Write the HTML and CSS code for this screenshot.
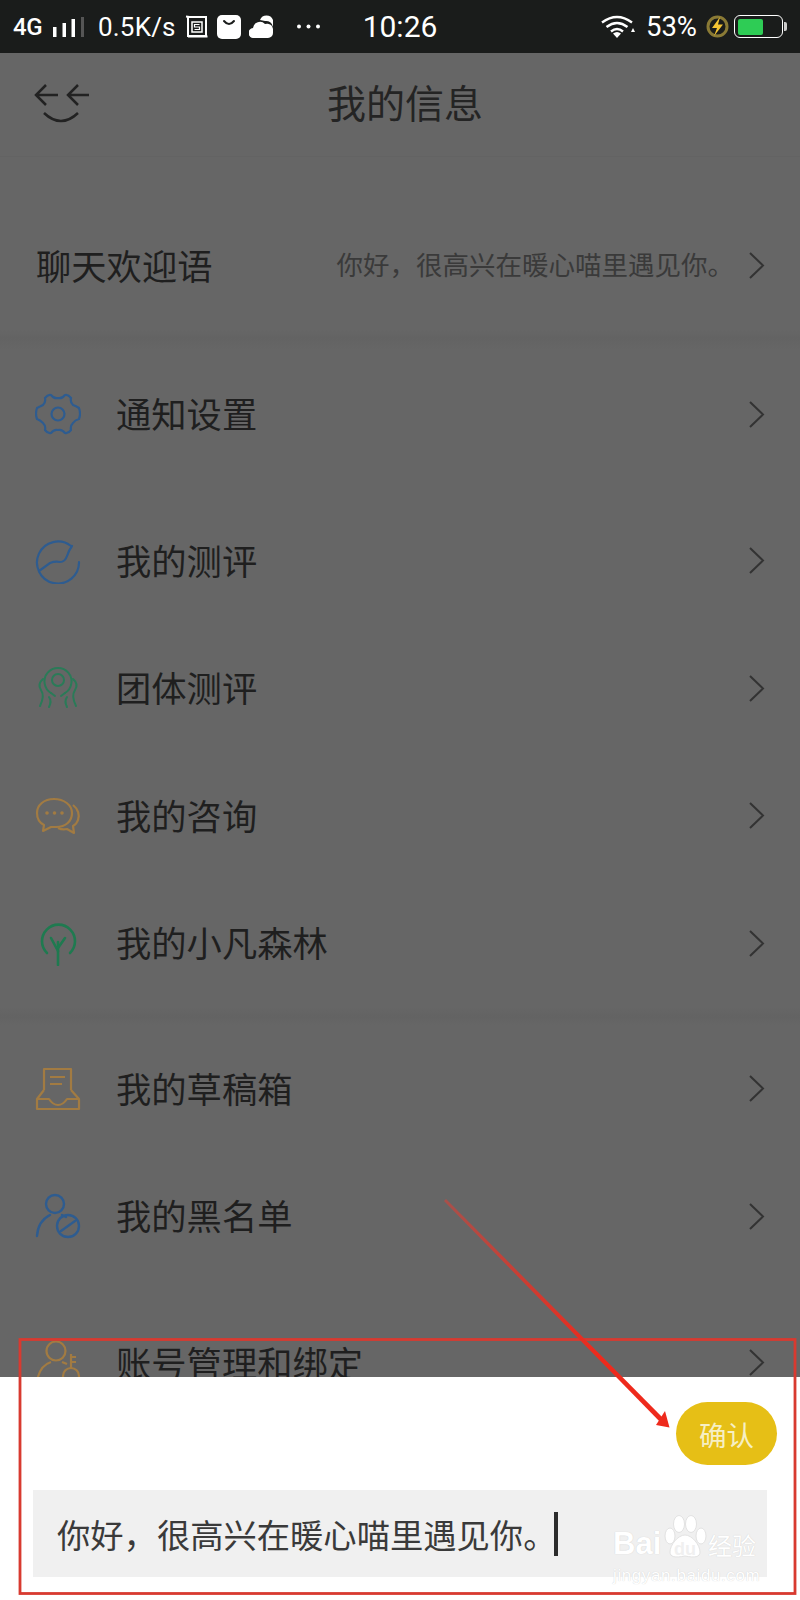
FILE: index.html
```html
<!DOCTYPE html>
<html lang="zh-CN">
<head>
<meta charset="utf-8">
<title>我的信息</title>
<link rel="stylesheet" href="styles.css">
</head>
<body>
<div class="phone">
  <div class="status">
    <div class="status-left">
      <span class="net">4G</span>
      <svg class="signal" width="31" height="20" viewBox="0 0 31 20"><g fill="#fff"><rect x="0" y="10" width="3.5" height="10"/><rect x="9.500" y="6" width="3.5" height="14"/><rect x="18.500" y="2" width="3.5" height="18"/></g><rect x="28" y="0" width="3" height="20" fill="#555"/></svg>
      <span class="speed">0.5K/s</span>
      <svg class="ic-s" width="24" height="24" viewBox="0 0 24 24"><path d="M1 1.500L4.500 2H21V21H3V2M3 21.500H22.500" fill="none" stroke="#fff" stroke-width="2"/><rect x="7" y="7" width="10" height="10" fill="none" stroke="#fff" stroke-width="1.500"/><path d="M14.500 9.500H9.500V12H14.500V14.500H9.500" fill="none" stroke="#fff" stroke-width="1.200"/></svg>
      <svg class="ic-bag" width="24" height="24" viewBox="0 0 24 24"><rect width="24" height="24" rx="5" fill="#fff"/><path d="M7 6Q12 12 17 6" fill="none" stroke="#1a1c1b" stroke-width="2" stroke-linecap="round"/></svg>
      <svg class="ic-cloud" width="24" height="23" viewBox="0 0 24 23"><path d="M5 23A5 5 0 0 1 4 13A7 7 0 0 1 16 9A6 6 0 0 1 24 15V18A5 5 0 0 1 19 23Z" fill="#fff"/><path d="M11 5A7 7 0 0 1 24 5V12A7 7 0 0 0 16 6Z" fill="#fff"/></svg>
      <svg class="dots" width="25" height="5" viewBox="0 0 25 5"><g fill="#fff"><circle cx="3" cy="2.500" r="2"/><circle cx="12.500" cy="2.500" r="2"/><circle cx="22" cy="2.500" r="2"/></g></svg>
    </div>
    <span class="time">10:26</span>
    <div class="status-right">
      <svg class="wifi" width="34" height="23" viewBox="0 0 34 23"><g fill="none" stroke="#fff" stroke-width="2.400"><path d="M1 7.500Q16 -3.500 31 7.500"/><path d="M5.500 12Q16 4 26.500 12"/><path d="M10 16.500Q16 11.500 22 16.500"/></g><path d="M12 18.500Q16 15.500 20 18.500L16 23Z" fill="#fff"/><path d="M30 17L34 17L32 13Z" fill="#fff"/></svg>
      <span class="pct">53%</span>
      <svg class="bolt" width="23" height="23" viewBox="0 0 23 23"><circle cx="11.500" cy="11.500" r="9.500" fill="none" stroke="#8a7a35" stroke-width="3"/><path d="M14 2L6 13H11L8 21L17 9.500H12Z" fill="#f3c433"/></svg>
      <div class="battery"><div class="battery-body"><div class="battery-fill"></div></div><div class="battery-nub"></div></div>
    </div>
  </div>

  <div class="main">
    <div class="header">
      <svg class="back" width="56" height="42" viewBox="0 0 56 42"><g fill="none" stroke="#222" stroke-width="2.500"><path d="M12 2L2 12L12 22M2 12H24"/><path d="M44 2L34 12L44 22M34 12H55"/><path d="M10 30Q27 46 44 30"/></g></svg>
      <h1 class="title">我的信息</h1>
    </div>
    <div class="group group-welcome">
      <div class="row">
        <span class="label label-first">聊天欢迎语</span>
        <span class="value">你好，很高兴在暖心喵里遇见你。</span>
        <svg class="chev" width="17" height="29" viewBox="0 0 17 29"><path d="M2 2L15 14.500L2 27" fill="none" stroke="#333" stroke-width="2"/></svg>
      </div>
    </div>
    <div class="group group-a">
      <div class="row">
        <svg class="ic" width="46" height="46" viewBox="0 0 46 46"><g fill="none" stroke="#2e5c90" stroke-width="2.200" stroke-linejoin="round"><path d="M16 4Q19 8 23 7Q27 8 30 4Q33 3 36 7Q35 11 38 14Q41 15 44 17Q46 23 44 28Q40 29 38 32Q35 35 36 39Q33 43 30 42Q27 38 23 39Q19 38 16 42Q13 43 10 39Q11 35 8 32Q5 29 2 28Q0 23 2 17Q6 15 8 14Q11 11 10 7Q13 3 16 4Z"/><circle cx="23" cy="23" r="6.500"/></g></svg>
        <span class="label">通知设置</span>
        <svg class="chev" width="17" height="29" viewBox="0 0 17 29"><path d="M2 2L15 14.500L2 27" fill="none" stroke="#333" stroke-width="2"/></svg>
      </div>
    </div>
    <div class="group group-b">
      <div class="row">
        <svg class="ic" width="46" height="46" viewBox="0 0 46 46"><g fill="none" stroke="#2e5c90" stroke-width="2.200" stroke-linecap="round"><path d="M36 8A21 21 0 1 0 44 24"/><path d="M4 33L15 25Q20 23 25 24Q30 24 32 18Q34 12 37 8"/></g></svg>
        <span class="label">我的测评</span>
        <svg class="chev" width="17" height="29" viewBox="0 0 17 29"><path d="M2 2L15 14.500L2 27" fill="none" stroke="#333" stroke-width="2"/></svg>
      </div>
      <div class="row">
        <svg class="ic" width="46" height="46" viewBox="0 0 46 46"><g fill="none" stroke="#2a7b58" stroke-width="2" stroke-linecap="round"><circle cx="23" cy="15" r="6"/><path d="M16 28A13.500 13.500 0 1 1 30 28"/><path d="M16 28L20 31M30 28L26 31"/><path d="M8 14Q2 19 6 25Q10 31 5 41"/><path d="M38 14Q44 19 40 25Q36 31 41 41"/><path d="M14 32Q17 36 14 42"/><path d="M32 32Q29 36 32 42"/></g></svg>
        <span class="label">团体测评</span>
        <svg class="chev" width="17" height="29" viewBox="0 0 17 29"><path d="M2 2L15 14.500L2 27" fill="none" stroke="#333" stroke-width="2"/></svg>
      </div>
      <div class="row">
        <svg class="ic" width="46" height="46" viewBox="0 0 46 46"><g fill="none" stroke="#a27b42" stroke-width="2.200" stroke-linejoin="round"><path d="M19 6C9 6 2 12 2 20C2 26 5 30 9 32L8 38L16 34H21C31 34 37 28 37 20C37 12 29 6 19 6Z"/><path d="M38 12C43 16 45 22 43 27C42 30 40 32 38 33L39 40L32 36C28 37 25 36 23 35"/></g><g fill="#a27b42"><circle cx="12" cy="20" r="1.800"/><circle cx="19.500" cy="20" r="1.800"/><circle cx="27" cy="20" r="1.800"/></g></svg>
        <span class="label">我的咨询</span>
        <svg class="chev" width="17" height="29" viewBox="0 0 17 29"><path d="M2 2L15 14.500L2 27" fill="none" stroke="#333" stroke-width="2"/></svg>
      </div>
      <div class="row">
        <svg class="ic" width="46" height="46" viewBox="0 0 46 46"><g fill="none" stroke="#1f7a50" stroke-width="2.600" stroke-linecap="round"><path d="M12 33A16.500 16.500 0 1 1 35 33"/><path d="M23 45V22"/><path d="M23 31L16 18"/><path d="M23 28L30 18"/></g></svg>
        <span class="label">我的小凡森林</span>
        <svg class="chev" width="17" height="29" viewBox="0 0 17 29"><path d="M2 2L15 14.500L2 27" fill="none" stroke="#333" stroke-width="2"/></svg>
      </div>
    </div>
    <div class="group group-c">
      <div class="row">
        <svg class="ic" width="46" height="46" viewBox="0 0 46 46"><g fill="none" stroke="#a27b42" stroke-width="2.200" stroke-linejoin="round"><path d="M9 24V3H36V24"/><path d="M15 11H30M15 18H27"/><path d="M9 24L2 33V43H44V33L36 24"/><path d="M2 33H14Q18 39 23 39Q28 39 32 33H44"/></g></svg>
        <span class="label">我的草稿箱</span>
        <svg class="chev" width="17" height="29" viewBox="0 0 17 29"><path d="M2 2L15 14.500L2 27" fill="none" stroke="#333" stroke-width="2"/></svg>
      </div>
      <div class="row">
        <svg class="ic" width="46" height="46" viewBox="0 0 46 46"><g fill="none" stroke="#2e5c90" stroke-width="2.400" stroke-linecap="round"><circle cx="20" cy="11" r="9"/><path d="M2 43Q3 28 15 22"/><path d="M27 22Q29 23 31 24"/><circle cx="33" cy="33" r="11"/><path d="M26 38L40 28"/></g></svg>
        <span class="label">我的黑名单</span>
        <svg class="chev" width="17" height="29" viewBox="0 0 17 29"><path d="M2 2L15 14.500L2 27" fill="none" stroke="#333" stroke-width="2"/></svg>
      </div>
    </div>
    <div class="group group-d">
      <div class="row">
        <svg class="ic" width="46" height="46" viewBox="0 0 46 46"><g fill="none" stroke="#a27b42" stroke-width="2.200"><circle cx="21" cy="11" r="9.500"/><path d="M2 42Q4 26 16 22"/><path d="M27 22L32 24"/><circle cx="36" cy="36" r="8"/><path d="M36 28V14M36 17H41M36 22H41"/></g></svg>
        <span class="label">账号管理和绑定</span>
        <svg class="chev" width="17" height="29" viewBox="0 0 17 29"><path d="M2 2L15 14.500L2 27" fill="none" stroke="#333" stroke-width="2"/></svg>
      </div>
    </div>
  </div>

  <div class="sheet">
    <div class="sheet-actions"><button class="confirm">确认</button></div>
    <div class="input">
      <span class="input-text">你好，很高兴在暖心喵里遇见你。</span>
      <span class="caret"></span>
    </div>
    <div class="mark">
      <div class="mark-top">
        <span class="mark-bai">Bai</span>
        <svg class="mark-paw" width="46" height="44" viewBox="0 0 46 44"><g fill="#fff" stroke="#e2e2e2" stroke-width="1"><ellipse cx="8" cy="21" rx="5" ry="8"/><ellipse cx="17" cy="9" rx="5.500" ry="8.500"/><ellipse cx="29" cy="9" rx="5.500" ry="8.500"/><ellipse cx="39" cy="21" rx="5" ry="8"/><path d="M23 20C30 20 38 30 38 37C38 42 33 43 23 41C13 43 8 42 8 37C8 30 16 20 23 20Z"/></g></svg>
        <span class="mark-du">du</span>
        <span class="mark-cn">经验</span>
      </div>
      <div class="mark-url">jingyan.baidu.com</div>
    </div>
  </div>

  <svg class="annot" width="800" height="1600" viewBox="0 0 800 1600">
    <defs><linearGradient id="fade" x1="445" y1="1200" x2="600" y2="1360" gradientUnits="userSpaceOnUse"><stop offset="0" stop-color="#a9504a"/><stop offset="1" stop-color="#ee2a1c"/></linearGradient></defs>
    <rect x="20" y="1339.500" width="775" height="254" fill="none" stroke="#d83a30" stroke-width="2.800"/>
    <path d="M444 1201L446 1199L667 1422L663 1425Z" fill="url(#fade)"/>
    <path d="M669.500 1427.500L656 1425L665 1411Z" fill="#ee2a1c"/>
  </svg>
</div>
</body>
</html>
```

FILE: styles.css
```css
* { box-sizing: border-box; }
html, body { margin: 0; padding: 0; }
body { font-family: "Noto Sans CJK SC", "Noto Sans", sans-serif; background: #666; }

.phone { position: relative; width: 800px; height: 1600px; display: flex; flex-direction: column; overflow: hidden; }

.status { height: 53px; flex: none; background: #1a1c1b; color: #fff; display: grid; grid-template-columns: 1fr auto 1fr; align-items: center; padding: 0 13px; font-family: Roboto, "Noto Sans", sans-serif; }
.status-left, .status-right { display: flex; align-items: center; }
.status-right { justify-content: flex-end; }
.net { font-size: 24px; font-weight: 500; letter-spacing: -0.5px; width: 40px; }
.signal { margin-right: 14px; margin-top: 1px; }
.speed { font-size: 26px; letter-spacing: 0.2px; width: 87px; }
.ic-s { margin-right: 8px; }
.ic-bag { margin-right: 8px; }
.ic-cloud { margin-right: 23px; }
.time { font-size: 30px; line-height: 53px; }
.pct { font-size: 27.500px; margin: 0 9px 0 11px; }
.bolt { margin-right: 5px; }
.battery { display: flex; align-items: center; }
.battery-body { width: 49px; height: 23px; border: 1.5px solid #fff; border-radius: 6px; padding: 2.5px; }
.battery-fill { width: 25px; height: 100%; background: #2ecc55; border-radius: 2px; }
.battery-nub { width: 3px; height: 9px; background: #ccc; border-radius: 0 2px 2px 0; margin-left: 1px; }

.main { flex: 1; min-height: 0; overflow: hidden; background: #666; }
.header { height: 104px; position: relative; display: flex; align-items: center; justify-content: center; padding-left: 10px; border-bottom: 1px solid #636363; }
.back { position: absolute; left: 34px; top: 30px; }
.title { margin: 0 0 7px; font-size: 39px; line-height: 1; font-weight: 400; color: #242424; }

.group { display: flex; flex-direction: column; }
.group-welcome { margin-top: 45px; }
.group-a { padding-top: 21px; background: linear-gradient(#666, #636363 8px, #666 20px); }
.group-b { margin-top: 19px; }
.group-c { padding-top: 18px; background: linear-gradient(#666, #636363 10px, #666 18px); }
.group-d { padding-top: 19px; }

.row { height: 127.5px; display: flex; align-items: center; padding: 0 35px; }
.ic { flex: none; margin-right: 35px; }
.label { font-size: 35.300px; line-height: 1; color: #1f1f1f; margin-bottom: 3px; }
.label-first { margin-left: 1px; }
.value { margin: 0 14px 3px auto; font-size: 26.500px; line-height: 1; color: #3a3a3a; white-space: nowrap; }
.value + .chev { margin-left: 0; }
.chev { flex: none; margin-left: auto; }

.sheet { position: relative; height: 223px; flex: none; background: #fff; padding: 25px 33px 0; display: flex; flex-direction: column; }
.sheet-actions { display: flex; justify-content: flex-end; height: 63px; margin-right: -10px; }
.confirm { width: 101px; height: 63px; border: 0; border-radius: 32px; background: #e6bf16; color: #f6efc4; font-family: inherit; font-size: 27.500px; padding: 0; }
.input { height: 87px; margin-top: 25px; background: #f0f0f0; display: flex; align-items: center; padding-left: 24px; width: 734px; }
.input-text { font-size: 33.300px; line-height: 1; color: #3a3a3a; white-space: nowrap; }
.caret { width: 4px; height: 44px; background: #2c2c2c; margin-left: -2px; flex: none; }

.mark { position: absolute; left: 613px; top: 138px; width: 150px; color: #fff; text-shadow: 0 0 1px #c8c8c8; font-family: "Liberation Sans", sans-serif; }
.mark-top { display: flex; align-items: flex-end; height: 44px; }
.mark-bai { font-size: 31px; font-weight: 700; line-height: 31px; width: 49px; }
.mark-paw { flex: none; margin-right: -46px; }
.mark-du { font-size: 18px; font-weight: 700; color: #f0f0f0; width: 46px; text-align: center; line-height: 20px; text-shadow: none; }
.mark-cn { font-family: "Noto Sans CJK SC", sans-serif; font-size: 24px; line-height: 28px; }
.mark-url { font-size: 17px; line-height: 16px; margin-top: 9px; letter-spacing: 0.6px; white-space: nowrap; }

.annot { position: absolute; left: 0; top: 0; pointer-events: none; }
```
